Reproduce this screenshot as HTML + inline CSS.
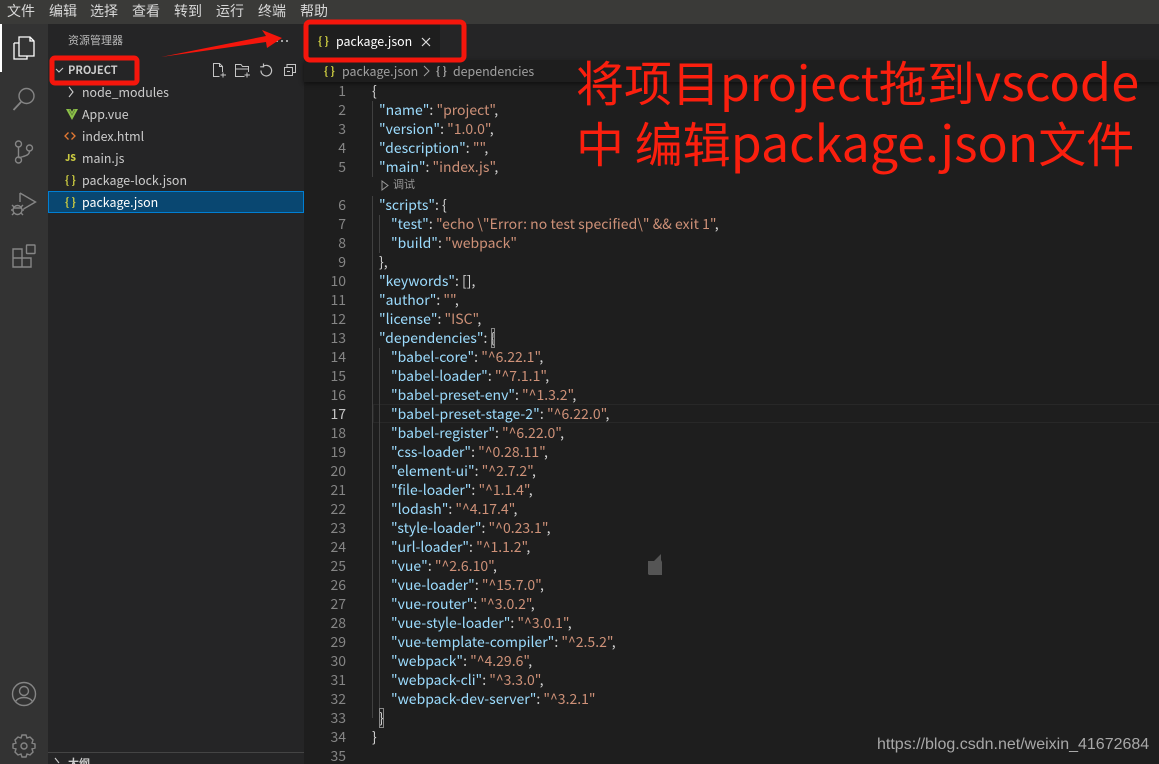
<!DOCTYPE html>
<html><head><meta charset="utf-8">
<style>
*{box-sizing:border-box}
html,body{margin:0;padding:0;width:1159px;height:764px;overflow:hidden;background:#1e1e1e}
body{position:relative;font-family:"Noto Sans CJK SC","Liberation Sans",sans-serif;color:#ccc}
.a{position:absolute;white-space:pre}
.menu span{position:absolute;top:0;font-size:14px;line-height:23px;color:#d8d8d8}
.f{position:absolute;left:82px;font-size:12.4px;line-height:22px;color:#ccc;white-space:pre}
.ln{position:absolute;left:305px;width:41px;text-align:right;font-size:14px;line-height:19px;color:#858585}
.c{position:absolute;font-size:14px;line-height:19px;white-space:pre;color:#d4d4d4}
.k{color:#9cdcfe}.s{color:#ce9178}
.g{position:absolute;width:1px;background:#404040}
.ic{position:absolute;left:0;top:0}
</style></head><body>
<div class="a" style="left:0;top:0;width:1159px;height:24px;background:#3a3a38"></div>
<div class="menu">
<span style="left:7px">文件</span><span style="left:49px">编辑</span><span style="left:90px">选择</span><span style="left:132px">查看</span><span style="left:174px">转到</span><span style="left:216px">运行</span><span style="left:258px">终端</span><span style="left:300px">帮助</span>
</div>
<div class="a" style="left:0;top:24px;width:48px;height:740px;background:#333"></div>
<div class="a" style="left:0;top:24px;width:2px;height:48px;background:#fff"></div>
<div class="a" style="left:48px;top:24px;width:256px;height:740px;background:#252526"></div>
<div class="a" style="left:304px;top:24px;width:855px;height:36px;background:#252526"></div>
<div class="a" style="left:304px;top:24px;width:136px;height:36px;background:#1e1e1e"></div>
<div class="a" style="left:304px;top:60px;width:855px;height:22px;background:#1e1e1e;box-shadow:0 2px 4px #111"></div>

<svg class="ic" width="304" height="764" viewBox="0 0 304 764" fill="none" stroke="#858585" stroke-width="1.4">
<g stroke="#fff" stroke-width="1.3"><path d="M19 37h11l4 4v15H19z" fill="#333"/><path d="M14 43h5M14 43v16h13v-3" /><path d="M30 37v4h4"/></g>
<circle cx="26.500" cy="96" r="7.500"/><path d="M21 102l-7.500 8" stroke-width="1.800"/>
<circle cx="18.500" cy="144" r="3"/><circle cx="18.500" cy="160" r="3"/><circle cx="29.500" cy="148" r="3"/><path d="M18.500 147v10M29.500 151c0 5-6 5-11 7"/>
<path d="M20 193v9M20 193l15.500 9-12 7"/><circle cx="17.500" cy="210" r="4.500" fill="#333"/><path d="M12 205l2 2M23 205l-2 2M11 210h2M22 210h2M12 215l2-2M23 215l-2-2M13 208h9"/>
<path d="M13 249h9v9h9v9H13zM13 258h18M22 258v9"/><rect x="26.500" y="245" width="8.500" height="8.500" rx=".5"/>
<circle cx="24" cy="694" r="11.500"/><circle cx="24" cy="691" r="4.500"/><path d="M15.500 702c2-6 15-6 17 0"/>
<circle cx="24" cy="746" r="3"/><path d="M22 735h4l1 3 3-1 3 3-1 3 3 1v4l-3 1 1 3-3 3-3-1-1 3h-4l-1-3-3 1-3-3 1-3-3-1v-4l3-1-1-3 3-3 3 1z"/>
<g stroke="#c5c5c5" stroke-width="1">
<path d="M219.500 76.500H213.500V63.500H219.500L222.500 66.500V72M219.500 63.500V66.500H222.500M223 72.500V77.500M220.500 75H226"/>
<path d="M244.500 76.500H235.500V64.500H241L242.500 66.500H248.500V72M235.500 69H248.500M247 72.500V77.500M244.500 75H250"/>
<path d="M263 66.500A5.300 5.300 0 1 1 261 70.500M263.500 63.500V66.800H260.200" stroke-width="1.200"/>
<path d="M287 67.500V64.500H295.500V72.500H292.500M284.500 67.500H292.500V75.500H284.500ZM287 71.500H290"/>
</g>
<path d="M56 69l3 3 4-4" stroke="#ccc" stroke-width="1.100"/>
<path d="M69 87l4 5-4 5" stroke="#ccc" stroke-width="1.100"/>
<path d="M55 758l4 5" stroke="#ccc" stroke-width="1.100"/>
<g fill="#ccc" stroke="none"><circle cx="277" cy="41" r="1"/><circle cx="282" cy="41" r="1"/><circle cx="287" cy="41" r="1"/></g>
</svg>
<div class="a" style="left:68px;top:32px;font-size:11px;line-height:17px;color:#bbb">资源管理器</div>
<div class="a" style="left:68px;top:61px;font-size:11px;font-weight:700;line-height:18px;color:#ccc">PROJECT</div>
<div class="f" style="top:81px">node_modules</div>
<svg class="ic" style="left:66px;top:109px" width="12" height="11" viewBox="0 0 12 11"><path d="M0 0h4.500l1.500 2.800L7.500 0H12L6 11z" fill="#8dc149"/><path d="M3 .5L6 6l3-5.500" fill="none" stroke="#5f7f3a" stroke-width=".8"/></svg>
<div class="f" style="top:103px">App.vue</div>
<svg class="ic" style="left:64px;top:131px" width="12" height="10"><path d="M4.500 1.500L1 5l3.500 3.500M7.500 1.500L11 5 7.500 8.500" fill="none" stroke="#e37933" stroke-width="1.300"/></svg>
<div class="f" style="top:125px">index.html</div>
<div class="a" style="left:65px;top:150px;font-size:9px;font-weight:900;line-height:16px;color:#cbcb41">JS</div>
<div class="f" style="top:147px">main.js</div>
<div class="a" style="left:65px;top:171px;font-size:11px;font-weight:700;line-height:18px;color:#cbcb41">{ }</div>
<div class="f" style="top:169px">package-lock.json</div>
<div class="a" style="left:48px;top:191px;width:256px;height:22px;background:#094771;border:1px solid #007fd4"></div>
<div class="a" style="left:65px;top:193px;font-size:11px;font-weight:700;line-height:18px;color:#cbcb41">{ }</div>
<div class="f" style="top:191px;color:#fff">package.json</div>
<div class="a" style="left:48px;top:752px;width:256px;height:1px;background:#444"></div>
<div class="a" style="left:68px;top:754px;font-size:11px;font-weight:700;line-height:18px;color:#ccc">大纲</div>

<div class="a" style="left:318px;top:32px;font-size:11px;font-weight:700;line-height:18px;color:#cbcb41">{ }</div>
<div class="a" style="left:336px;top:31px;font-size:12.4px;line-height:20px;color:#fff">package.json</div>
<svg class="ic" style="left:421px;top:37px" width="10" height="10"><path d="M1 1l8 8M9 1l-8 8" stroke="#ddd" stroke-width="1.200"/></svg>
<div class="a" style="left:324px;top:62px;font-size:11px;font-weight:700;line-height:18px;color:#cbcb41">{ }</div>
<div class="a" style="left:342px;top:61px;font-size:12.4px;line-height:20px;color:#a0a0a0">package.json</div>
<svg class="ic" style="left:423px;top:65px" width="8" height="12"><path d="M1 1l5 5-5 5" stroke="#a0a0a0" fill="none"/></svg>
<div class="a" style="left:436px;top:62px;font-size:11px;font-weight:700;line-height:18px;color:#a0a0a0">{ }</div>
<div class="a" style="left:453px;top:61px;font-size:12.4px;line-height:20px;color:#a0a0a0">dependencies</div>

<div class="a" style="left:373px;top:404px;width:786px;height:19px;border:1px solid #282828;border-right:0"></div>
<div class="g" style="left:372px;top:101px;height:76px"></div>
<div class="g" style="left:372px;top:196px;height:522px"></div>
<div class="g" style="left:379px;top:215px;height:38px"></div>
<div class="g" style="left:379px;top:348px;height:361px"></div>

<div class="ln" style="top:82px">1</div><div class="c" style="left:372px;top:82px">{</div>
<div class="ln" style="top:101px">2</div><div class="c" style="left:379px;top:101px"><span class="k">"name"</span>: <span class="s">"project"</span>,</div>
<div class="ln" style="top:120px">3</div><div class="c" style="left:379px;top:120px"><span class="k">"version"</span>: <span class="s">"1.0.0"</span>,</div>
<div class="ln" style="top:139px">4</div><div class="c" style="left:379px;top:139px"><span class="k">"description"</span>: <span class="s">""</span>,</div>
<div class="ln" style="top:158px">5</div><div class="c" style="left:379px;top:158px"><span class="k">"main"</span>: <span class="s">"index.js"</span>,</div>
<svg class="ic" style="left:381px;top:180px" width="9" height="11"><path d="M1 1l6 4.500-6 4.500z" stroke="#999" fill="none"/></svg>
<div class="a" style="left:393px;top:176px;font-size:11px;line-height:16px;color:#999">调试</div>
<div class="ln" style="top:196px">6</div><div class="c" style="left:379px;top:196px"><span class="k">"scripts"</span>: {</div>
<div class="ln" style="top:215px">7</div><div class="c" style="left:391px;top:215px;letter-spacing:.04px"><span class="k">"test"</span>: <span class="s">"echo \"Error: no test specified\" &amp;&amp; exit 1"</span>,</div>
<div class="ln" style="top:234px">8</div><div class="c" style="left:391px;top:234px"><span class="k">"build"</span>: <span class="s">"webpack"</span></div>
<div class="ln" style="top:253px">9</div><div class="c" style="left:379px;top:253px">},</div>
<div class="ln" style="top:272px">10</div><div class="c" style="left:379px;top:272px"><span class="k">"keywords"</span>: [],</div>
<div class="ln" style="top:291px">11</div><div class="c" style="left:379px;top:291px"><span class="k">"author"</span>: <span class="s">""</span>,</div>
<div class="ln" style="top:310px">12</div><div class="c" style="left:379px;top:310px"><span class="k">"license"</span>: <span class="s">"ISC"</span>,</div>
<div class="ln" style="top:329px">13</div><div class="c" style="left:379px;top:329px"><span class="k">"dependencies"</span>: <span style="outline:1px solid #888;outline-offset:-1px">{</span></div>
<div class="ln" style="top:348px">14</div><div class="c" style="left:391px;top:348px"><span class="k">"babel-core"</span>: <span class="s">"^6.22.1"</span>,</div>
<div class="ln" style="top:367px">15</div><div class="c" style="left:391px;top:367px"><span class="k">"babel-loader"</span>: <span class="s">"^7.1.1"</span>,</div>
<div class="ln" style="top:386px">16</div><div class="c" style="left:391px;top:386px"><span class="k">"babel-preset-env"</span>: <span class="s">"^1.3.2"</span>,</div>
<div class="ln" style="top:405px;color:#c6c6c6">17</div><div class="c" style="left:391px;top:405px;letter-spacing:.05px"><span class="k">"babel-preset-stage-2"</span>: <span class="s">"^6.22.0"</span>,</div>
<div class="ln" style="top:424px">18</div><div class="c" style="left:391px;top:424px"><span class="k">"babel-register"</span>: <span class="s">"^6.22.0"</span>,</div>
<div class="ln" style="top:443px">19</div><div class="c" style="left:391px;top:443px"><span class="k">"css-loader"</span>: <span class="s">"^0.28.11"</span>,</div>
<div class="ln" style="top:462px">20</div><div class="c" style="left:391px;top:462px"><span class="k">"element-ui"</span>: <span class="s">"^2.7.2"</span>,</div>
<div class="ln" style="top:481px">21</div><div class="c" style="left:391px;top:481px"><span class="k">"file-loader"</span>: <span class="s">"^1.1.4"</span>,</div>
<div class="ln" style="top:500px">22</div><div class="c" style="left:391px;top:500px"><span class="k">"lodash"</span>: <span class="s">"^4.17.4"</span>,</div>
<div class="ln" style="top:519px">23</div><div class="c" style="left:391px;top:519px"><span class="k">"style-loader"</span>: <span class="s">"^0.23.1"</span>,</div>
<div class="ln" style="top:538px">24</div><div class="c" style="left:391px;top:538px"><span class="k">"url-loader"</span>: <span class="s">"^1.1.2"</span>,</div>
<div class="ln" style="top:557px">25</div><div class="c" style="left:391px;top:557px"><span class="k">"vue"</span>: <span class="s">"^2.6.10"</span>,</div>
<div class="ln" style="top:576px">26</div><div class="c" style="left:391px;top:576px"><span class="k">"vue-loader"</span>: <span class="s">"^15.7.0"</span>,</div>
<div class="ln" style="top:595px">27</div><div class="c" style="left:391px;top:595px"><span class="k">"vue-router"</span>: <span class="s">"^3.0.2"</span>,</div>
<div class="ln" style="top:614px">28</div><div class="c" style="left:391px;top:614px"><span class="k">"vue-style-loader"</span>: <span class="s">"^3.0.1"</span>,</div>
<div class="ln" style="top:633px">29</div><div class="c" style="left:391px;top:633px"><span class="k">"vue-template-compiler"</span>: <span class="s">"^2.5.2"</span>,</div>
<div class="ln" style="top:652px">30</div><div class="c" style="left:391px;top:652px"><span class="k">"webpack"</span>: <span class="s">"^4.29.6"</span>,</div>
<div class="ln" style="top:671px">31</div><div class="c" style="left:391px;top:671px"><span class="k">"webpack-cli"</span>: <span class="s">"^3.3.0"</span>,</div>
<div class="ln" style="top:690px">32</div><div class="c" style="left:391px;top:690px"><span class="k">"webpack-dev-server"</span>: <span class="s">"^3.2.1"</span></div>
<div class="ln" style="top:709px">33</div><div class="c" style="left:379px;top:709px"><span style="outline:1px solid #888;outline-offset:-1px">}</span></div>
<div class="ln" style="top:728px">34</div><div class="c" style="left:372px;top:728px">}</div>
<div class="ln" style="top:747px">35</div>

<svg class="ic" style="left:647px;top:552px" width="17" height="24"><path d="M1 9h6l7-7v6l1 2v13H2l-1-1z" fill="#555"/></svg>

<div class="a" style="left:877px;top:735px;font-family:'Liberation Sans',sans-serif;font-size:16px;line-height:20px;color:#a8a8a8">https://blog.csdn.net/weixin_41672684</div>

<div class="a" style="left:576px;top:47px;font-size:48px;line-height:64px;color:#fb1f0e">将项目<span style="font-size:48px">project</span>拖到<span style="font-size:50.500px">vscode</span></div>
<div class="a" style="left:576px;top:109px;font-size:48px;line-height:64px;color:#fb1f0e">中 编辑<span style="font-size:50px">package.json</span>文件</div>

<svg class="ic" width="1159" height="764" style="pointer-events:none">
<g fill="none" stroke="#f5160c" stroke-width="5">
<rect x="52" y="58" width="85" height="25" rx="3"/>
<rect x="306" y="22" width="158" height="38" rx="4"/>
</g>
<path d="M161 57L266 36l-4-6 20 8-15 10-1-6z" fill="#f5160c"/>
</svg>
</body></html>
